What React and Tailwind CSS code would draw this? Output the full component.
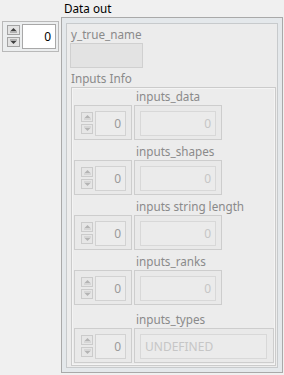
import React from "react";

const font = { fontFamily: '"Noto Sans", "Open Sans", sans-serif' };

function Spin({ dir, active }) {
  const fill = active ? "#404040" : "#b4b4b4";
  return (
    <div
      className={
        "flex items-center justify-center border " +
        (active
          ? "w-[13px] h-[10px] border-[#a3a3a3] bg-[#e3e3e3]"
          : "w-[12px] h-[10px] border-[#cbcbcb] bg-[#e6e6e6]")
      }
    >
      <svg width="9" height="6" viewBox="0 0 9 6">
        {dir === "up" ? (
          <>
            <polygon points="1.5,4 4.5,1 7.5,4" fill={fill} />
            <rect x="1" y="4.5" width="7" height="1" fill={fill} opacity="0.6" />
          </>
        ) : (
          <>
            <rect x="1" y="0.5" width="7" height="1" fill={fill} opacity="0.6" />
            <polygon points="1.5,2 4.5,5 7.5,2" fill={fill} />
          </>
        )}
      </svg>
    </div>
  );
}

function IndexBox() {
  return (
    <div className="w-[58px] h-[35px] border border-[#cdcdcd] bg-[#e9e9e9] flex items-start pl-[6px] pt-[5px] gap-[2px] shrink-0">
      <div className="flex flex-col gap-[2px] pt-[1px]">
        <Spin dir="up" />
        <Spin dir="down" />
      </div>
      <div className="w-[31px] h-[25px] border border-[#d2d2d2] bg-[#ececec] flex items-center justify-end pr-[4px] text-[12px] text-[#9a9a9a]">
        0
      </div>
    </div>
  );
}

function Row({ label, value, wide, mt }) {
  return (
    <div className={"flex flex-col " + mt}>
      <div className="pl-[64px] h-[16px] leading-[16px] text-[11.7px] text-[#8a8a8a] mb-[1px] whitespace-nowrap">
        {label}
      </div>
      <div className="flex pl-[2px] gap-[2px]">
        <IndexBox />
        <div
          className={
            "h-[35px] border border-[#cdcdcd] bg-[#e9e9e9] pl-[5px] pt-[5px] " +
            (wide ? "w-[140px]" : "w-[88px]")
          }
        >
          <div
            className={
              "h-[25px] border border-[#d8d8d8] bg-[#ebebeb] flex items-center text-[12px] text-[#c6c6c6] " +
              (wide ? "w-[127px] justify-start pl-[4px]" : "w-[76px] justify-end pr-[4px]")
            }
          >
            {value}
          </div>
        </div>
      </div>
    </div>
  );
}

export default function App() {
  return (
    <div className="w-[284px] h-[375px] bg-[#f0f0f0] flex overflow-hidden" style={font}>
      <div className="pl-[2px] pt-[21px]">
        <div className="w-[57px] h-[31px] border border-[#b9b9b9] bg-[#eceeef] flex items-start pl-[4px] pt-[2px] gap-[2px]">
          <div className="flex flex-col gap-[2px] pt-[1px]">
            <Spin dir="up" active />
            <Spin dir="down" active />
          </div>
          <div className="w-[34px] h-[25px] border border-[#a8a8a8] bg-white flex items-center justify-end pr-[4px] text-[12px] text-black">
            0
          </div>
        </div>
      </div>
      <div className="ml-[2px] flex flex-col">
        <div className="h-[17px] pl-[3px] leading-[17px] text-[11.7px] text-black">Data out</div>
        <div className="w-[222px] h-[356px] border border-[#a9a9a9] bg-[#e4e8eb] pl-[4px] pr-[4px] pt-[5px] pb-[4px]">
          <div className="w-full h-full border border-[#c7cacc] bg-[#ececec] pl-[4px] pr-[1px] flex flex-col">
            <div className="h-[17px] mt-[2px] leading-[17px] text-[11.7px] text-[#8a8a8a]">y_true_name</div>
            <div className="-ml-[1px] w-[73px] h-[25px] border border-[#d0d0d0] bg-[#e3e3e3]" />
            <div className="h-[18px] mt-[1px] leading-[18px] text-[11.7px] text-[#8a8a8a]">Inputs Info</div>
            <div className="flex-1 mb-[1px] border border-[#cbcbcb] shadow-[inset_0_0_0_1px_#f4f4f4] flex flex-col">
              <Row label="inputs_data" value="0" mt="mt-0" />
              <Row label="inputs_shapes" value="0" mt="mt-[3px]" />
              <Row label="inputs string length" value="0" mt="mt-[3px]" />
              <Row label="inputs_ranks" value="0" mt="mt-[3px]" />
              <Row label="inputs_types" value="UNDEFINED" wide mt="mt-[6px]" />
            </div>
          </div>
        </div>
      </div>
    </div>
  );
}
